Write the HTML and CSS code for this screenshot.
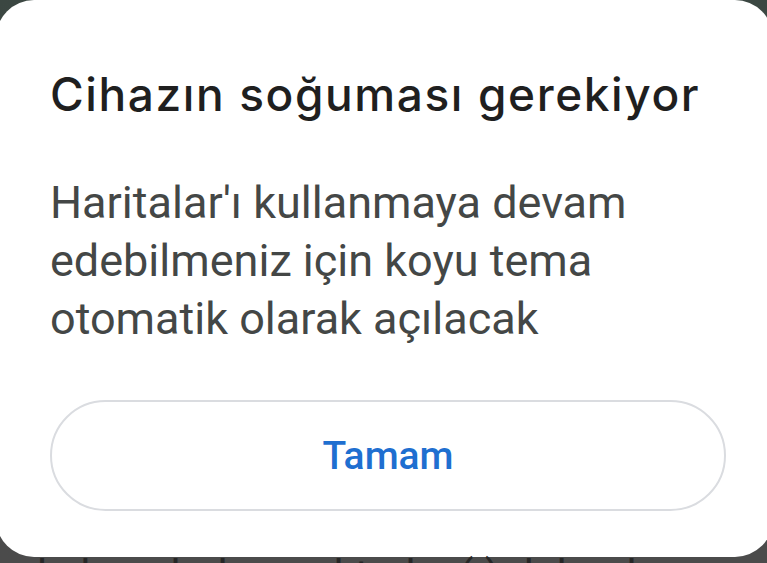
FILE: index.html
```html
<!DOCTYPE html>
<html lang="tr">
<head>
    <meta charset="UTF-8">
    <meta name="viewport" content="width=device-width, initial-scale=1.0">
    <title>Cihazın soğuması gerekiyor</title>
    <link rel="stylesheet" href="styles.css">
</head>
<body>
    <div class="dialog">
        <h2 class="title">Cihazın soğuması gerekiyor</h2>
        <p class="message">Haritalar'ı kullanmaya devam edebilmeniz için koyu tema otomatik olarak açılacak</p>
        <button class="ok-button">Tamam</button>
    </div>
    <p class="behind">nda lıma bulunmaktadır. (-) dalanda</p>
</body>
</html>
```

FILE: styles.css
```css
body {
    margin: 0;
    height: 563px;
    overflow: hidden;
    background: linear-gradient(#3b4742, #4a4c4b 60%, #4b4b4b);
    font-family: Roboto, "Noto Sans", sans-serif;
}
.dialog {
    box-sizing: border-box;
    height: 557px;
    margin: 0 -6px 0 -4px;
    padding: 64px 30px 0 54px;
    background: #ffffff;
    border-radius: 38px;
}
.title {
    margin: 0;
    font-family: Inter, Roboto, sans-serif;
    font-size: 46px;
    font-weight: 500;
    letter-spacing: 1.6px;
    line-height: 60px;
    color: #1f1f1f;
    white-space: nowrap;
}
.message {
    margin: 50px 0 0;
    font-size: 45px;
    font-weight: 400;
    line-height: 58px;
    color: #444746;
    max-width: 640px;
}
.ok-button {
    display: block;
    box-sizing: border-box;
    width: 676px;
    height: 111px;
    margin: 52px 0 0 0;
    border: 2px solid #dadce0;
    border-radius: 56px;
    background: #ffffff;
    font-family: Roboto, "Noto Sans", sans-serif;
    font-size: 39px;
    font-weight: 500;
    color: #1f6fd0;
}
.behind {
    margin: -6px 0 0 0;
    font-size: 42px;
    line-height: 50px;
    color: #262626;
    white-space: nowrap;
}
```
